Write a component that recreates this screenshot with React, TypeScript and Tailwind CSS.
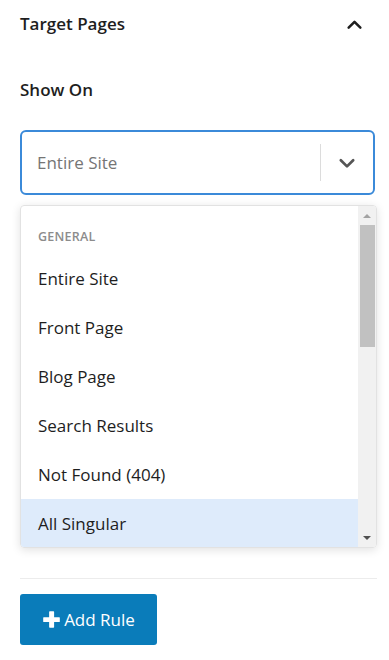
import React from "react";

const items = ["Entire Site", "Front Page", "Blog Page", "Search Results", "Not Found (404)", "All Singular"];

function Chevron({ up, className }: { up?: boolean; className?: string }) {
  return (
    <svg viewBox="0 0 16 16" className={className} fill="none" stroke="currentColor" strokeWidth="2.4" strokeLinecap="round" strokeLinejoin="round">
      {up ? <polyline points="2.5,11 8,5.5 13.5,11" /> : <polyline points="2.5,5.5 8,11 13.5,5.5" />}
    </svg>
  );
}

export default function App() {
  return (
    <div className="w-[389px] h-[660px] bg-white pl-[20px] pr-[14px] text-[#1e1e1e]" style={{ fontFamily: '"Open Sans", "Noto Sans", sans-serif' }}>
      <div className="flex items-center justify-between pt-[11px] h-[37px]">
        <h2 className="text-[17px] leading-[26px] font-semibold">Target Pages</h2>
        <Chevron up className="w-[17px] h-[17px] mr-[12px] text-[#1e1e1e]" />
      </div>

      <div className="pt-[40px] text-[17px] leading-[26px] font-semibold">Show On</div>

      <div className="mt-[27px] h-[65px] rounded-[6px] border-2 border-[#3b8ad9] flex items-center">
        <span className="flex-1 pl-[15px] text-[17px] text-[#757575]">Entire Site</span>
        <div className="w-px h-[37px] bg-[#dcdcdc]" />
        <Chevron className="w-[18px] h-[18px] mx-[17px] text-[#555]" />
      </div>

      <div className="mt-[10px] mr-[-2px] h-[343px] rounded-[4px] border border-[#e2e2e2] shadow-[0_2px_10px_rgba(0,0,0,0.12)] flex overflow-hidden">
        <div className="flex-1">
          <div className="h-[48px] pt-[22px] pl-[17px] text-[12.5px] leading-[18px] font-semibold text-[#8c8c8c] uppercase tracking-[0.02em]">General</div>
          {items.map((it, i) => (
            <div key={it} className={`h-[49px] flex items-center pl-[17px] text-[17px] ${i === items.length - 1 ? "bg-[#deebfb]" : ""}`}>
              {it}
            </div>
          ))}
        </div>
        <div className="w-[18px] bg-[#f1f1f1] flex flex-col items-center">
          <div className="h-[19px] flex items-center justify-center">
            <div className="w-0 h-0 border-l-[4px] border-r-[4px] border-b-[4px] border-l-transparent border-r-transparent border-b-[#a3a3a3]" />
          </div>
          <div className="w-[15px] h-[122px] bg-[#c1c1c1]" />
          <div className="flex-1" />
          <div className="h-[19px] flex items-center justify-center">
            <div className="w-0 h-0 border-l-[4px] border-r-[4px] border-t-[4px] border-l-transparent border-r-transparent border-t-[#505050]" />
          </div>
        </div>
      </div>

      <div className="mt-[30px] h-px bg-[#ececec] mr-[-2px]" />

      <button className="mt-[15px] w-[137px] h-[51px] rounded-[3px] bg-[#0a7cba] text-white flex items-center justify-center gap-[3px] text-[17px]">
        <svg viewBox="0 0 16 16" className="w-[19px] h-[19px]" fill="currentColor">
          <rect x="6" y="1" width="4.2" height="14" rx="0.6" />
          <rect x="1" y="6" width="14" height="4.2" rx="0.6" />
        </svg>
        Add Rule
      </button>
    </div>
  );
}
